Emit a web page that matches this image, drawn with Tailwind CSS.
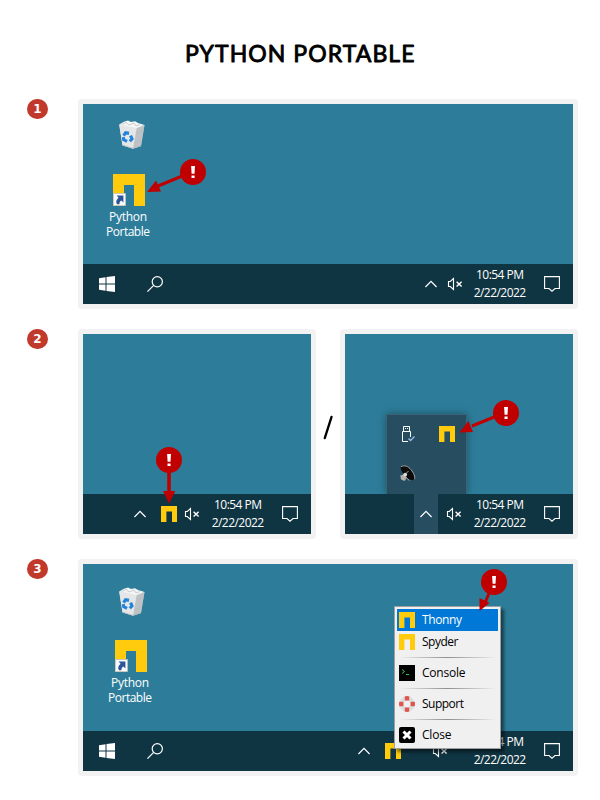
<!DOCTYPE html>
<html lang="en">
<head>
<meta charset="utf-8">
<title>Python Portable</title>
<script src="https://cdn.jsdelivr.net/npm/@tailwindcss/browser@4"></script>
</head>
<body class="bg-white w-[600px] h-[800px] overflow-hidden font-['Open_Sans',sans-serif]">
<svg width="0" height="0" class="absolute">
  <defs>
    <symbol id="win" viewBox="0 0 16 16"><path fill="#fff" d="M0 2.3 6.5 1.3V7.5H0zM7.5 1.1 16 0V7.5H7.5zM0 8.5H6.5V14.7L0 13.7zM7.5 8.5H16V16L7.5 14.9z"/></symbol>
    <symbol id="search" viewBox="0 0 16 16"><g fill="none" stroke="#fff" stroke-width="1.2"><circle cx="10.3" cy="5.7" r="5.1"/><path d="M6.7 9.3.4 15.6"/></g></symbol>
    <symbol id="chev" viewBox="0 0 12 8"><path fill="none" stroke="#fff" stroke-width="1.3" d="M.4 7 6 1.4 11.6 7"/></symbol>
    <symbol id="speaker" viewBox="0 0 16 14"><g fill="none" stroke="#fff"><path stroke-width="1.1" d="M1.5 4.5H3.3L6.5 1.5V12.5L3.3 9.5H1.5z"/><path stroke-width="1.4" d="M9.6 4.7 14.6 9.5M14.6 4.7 9.6 9.5"/></g></symbol>
    <symbol id="note" viewBox="0 0 16 16"><path fill="none" stroke="#fff" stroke-width="1.1" d="M.6.6H15.4V12.5H11L8 15.2 5 12.5H.6z"/></symbol>
    <symbol id="arch" viewBox="0 0 32 32"><path fill="#ffcb0c" d="M0 0H32V32H21V11H11V32H0z"/></symbol>
    <symbol id="archS" viewBox="0 0 16 16"><path fill="#ffcb0c" d="M0 0H16V16H11V5.6H5.4V16H0z"/></symbol>
    <symbol id="bang" viewBox="0 0 26 26"><circle cx="13" cy="13" r="13" fill="#c00000"/><path fill="#fff" d="M11.1 7H15L14.5 14.8H11.6zM11.5 16.4H14.6V19H11.5z"/></symbol>
    <symbol id="bin" viewBox="0 0 28 30">
      <path fill="#d3d5d7" d="M1.2 4.5 19 6.8 26.5 5 23 26 15 28.8 4.5 25.5z"/>
      <path fill="#b4b8bb" d="M18.8 7 26.5 5 23 26 15 28.8z" opacity=".65"/>
      <path fill="#e4e6e8" d="M1.2 4.5 18.8 7 15 28.5 4.5 25.2z"/>
      <path fill="#f5f6f6" d="M1.2 4.5 6 1.8 10 .6 13 2 17 1.2 20 3 26.5 5 18.8 8z"/>
      <path fill="none" stroke="#b4babe" stroke-width=".7" d="M4 4.5 8 2.5 11 5 16 3 18 6 22 4.5M19 13l5-2M17 23l6-3M4.5 25l10.5 3.3L23 25.8"/>
      <path fill="none" stroke="#2083dd" stroke-width="3.1" d="M5.6 15.6 7.6 12.8 11 13.4M12.6 15.6 14 19 11.8 21.3M9 21.4 5.6 19.6 5.4 17.2"/>
    </symbol>
    <symbol id="short" viewBox="0 0 13 13"><path fill="#fafafa" stroke="#b8c0c4" stroke-width=".8" d="M.4.4H12.6V12.6H.4z"/><path fill="#2d549b" d="M3.6 2.5H10.4V9.4L8.3 7.4C6.7 8.4 6.4 9.5 6.4 11.3H4C2.4 8.8 3.4 6.7 5.6 4.8z"/></symbol>
  </defs>
</svg>

<header class="h-[99px] flex justify-center pt-[36px]">
  <svg width="236" height="36"><text x="3" y="26.4" textLength="229.5" font-family="Lato, sans-serif" font-size="23" stroke="#000" stroke-width=".9" stroke-linejoin="round">PYTHON PORTABLE</text></svg>
</header>

<main class="flex flex-col gap-5 pl-[27px] pr-[22px]">
  <!-- Step 1 -->
  <section class="flex gap-[30px]">
    <div class="w-[21px] h-5 rounded-full bg-[#c1392b] text-white text-[12px] font-['DejaVu_Sans',sans-serif] font-bold leading-[21px] text-center">1</div>
    <div class="relative w-[500px] h-[210px] rounded bg-[#f2f2f2] p-[5px] flex flex-col">
      <div class="flex-1 bg-[#2d7d9a] pt-4 pl-[17px]">
        <div class="w-[56px] flex flex-col items-center">
          <svg class="ml-[7px]" width="28" height="30"><use href="#bin"/></svg>
          <div class="relative mt-6 ml-[1px] w-8 h-8"><svg width="32" height="32"><use href="#arch"/></svg><svg class="absolute left-0 bottom-0" width="13" height="13"><use href="#short"/></svg></div>
          <svg class="mt-1" width="56" height="32" fill="#fff" font-size="12"><text x="9" y="11" textLength="38">Python</text><text x="6" y="26" textLength="44">Portable</text></svg>
        </div>
      </div>
      <div class="h-10 shrink-0 bg-[#103542] flex items-center pl-4 pr-[13px]">
        <svg width="16" height="16"><use href="#win"/></svg>
        <svg class="ml-8" width="16" height="16"><use href="#search"/></svg>
        <svg class="ml-auto" width="12" height="8"><use href="#chev"/></svg>
        <svg class="ml-[10px]" width="16" height="14"><use href="#speaker"/></svg>
        <svg class="ml-[10px] mr-[17px]" width="54" height="40" fill="#fff" font-size="12"><text x="3" y="15" textLength="48">10:54 PM</text><text x=".7" y="33" textLength="52.5">2/22/2022</text></svg>
        <svg width="16" height="16"><use href="#note"/></svg>
      </div>
      <svg class="absolute left-[68px] top-[60px]" width="62" height="36"><path stroke="#c00000" stroke-width="3" d="M46 13 12 27"/><path fill="#c00000" d="M1 33 10 21.5 15 32.5z"/><use href="#bang" x="34" width="26" height="26"/></svg>
    </div>
  </section>

  <!-- Step 2 -->
  <section class="flex">
    <div class="w-[21px] h-5 mr-[30px] rounded-full bg-[#c1392b] text-white text-[12px] font-['DejaVu_Sans',sans-serif] font-bold leading-[21px] text-center">2</div>
    <div class="relative w-[238px] h-[210px] rounded bg-[#f2f2f2] p-[5px] flex flex-col">
      <div class="flex-1 bg-[#2d7d9a]"></div>
      <div class="h-10 shrink-0 bg-[#103542] flex items-center justify-end pr-[13px]">
        <svg width="12" height="8"><use href="#chev"/></svg>
        <svg class="ml-[15px]" width="16" height="16"><use href="#archS"/></svg>
        <svg class="ml-[7px]" width="16" height="14"><use href="#speaker"/></svg>
        <svg class="ml-[11px] mr-[17px]" width="54" height="40" fill="#fff" font-size="12"><text x="3" y="15" textLength="48">10:54 PM</text><text x=".7" y="33" textLength="52.5">2/22/2022</text></svg>
        <svg width="16" height="16"><use href="#note"/></svg>
      </div>
      <svg class="absolute left-[77px] top-[118px]" width="28" height="58"><path stroke="#c00000" stroke-width="3.6" d="M14 20V48"/><path fill="#c00000" d="M8 44H20.3L14 56.5z"/><use href="#bang" x="1" width="26" height="26"/></svg>
    </div>
    <svg width="24" height="210"><path fill="none" stroke="#000" stroke-width="2.4" stroke-linecap="round" d="M15.5 88 8.8 109"/></svg>
    <div class="relative w-[238px] h-[210px] rounded bg-[#f2f2f2] p-[5px] flex flex-col">
      <div class="flex-1 bg-[#2d7d9a]"></div>
      <div class="relative h-10 shrink-0 bg-[#103542] flex items-center justify-end pr-[13px]">
        <div class="w-6 h-10 bg-[#274d61] flex items-center justify-center"><svg width="12" height="8"><use href="#chev"/></svg></div>
        <svg class="ml-2" width="16" height="14"><use href="#speaker"/></svg>
        <svg class="ml-[11px] mr-[17px]" width="54" height="40" fill="#fff" font-size="12"><text x="3" y="15" textLength="48">10:54 PM</text><text x=".7" y="33" textLength="52.5">2/22/2022</text></svg>
        <svg width="16" height="16"><use href="#note"/></svg>
      </div>
      <div class="absolute left-[46px] top-[85px] w-[81px] h-[80px] [clip-path:inset(-12px_-12px_0_-12px)] bg-[#274d61] border border-b-0 border-[#3b6375] shadow-[0_0_8px_rgba(0,0,0,0.35)] pt-[10px] px-[12px] grid grid-cols-2 grid-rows-[40px_24px] gap-x-[15px] items-start">
        <svg width="18" height="18" fill="none" stroke="#fff"><path d="M4.5 6V1.5H10.5V6M9 16.5H3.5V6.5H11.5V12"/><path fill="#fff" stroke="none" d="M6 3H7V4H6zM8 3H9V4H8z"/><path stroke="#9bbbe8" stroke-width="1.4" d="M9.5 13.5 11.5 15.5 15.5 11.5"/></svg>
        <svg class="ml-[5px] mt-px" width="16" height="16"><use href="#archS"/></svg>
        <svg width="18" height="18"><path d="M2 1.5C5-.5 9.5 1 12 4.5 14.5 7.5 17 12 15.5 14.5 11 16 7 13 4.5 9 2.5 6 1 3.5 2 1.5z" fill="#0c0c0c"/><path d="M2 1.7C5-.2 9.5 1.2 12 4.7 14.5 7.7 16.5 12 15.5 14.3" fill="none" stroke="#c8c8c8" stroke-width=".8"/><path d="M1.3 10.5 5 9.5 8 12.5 5.5 16 2 14.5z" fill="#b5b1ab"/><circle cx="6.2" cy="9.6" r="1.9" fill="#ddd"/><path d="M7.5 13 10.5 15.5M7 8.5 9.5 6" stroke="#aaa"/></svg>
      </div>
      <svg class="absolute left-[118px] top-[70px]" width="64" height="38"><path stroke="#c00000" stroke-width="3" d="M46 14 14 27"/><path fill="#c00000" d="M1.5 33.5 10.5 22 15 33z"/><use href="#bang" x="35" y="1" width="26" height="26"/></svg>
    </div>
  </section>

  <!-- Step 3 -->
  <section class="flex gap-[30px]">
    <div class="w-[21px] h-5 rounded-full bg-[#c1392b] text-white text-[12px] font-['DejaVu_Sans',sans-serif] font-bold leading-[21px] text-center">3</div>
    <div class="relative w-[500px] h-[217px] rounded bg-[#f2f2f2] p-[5px] flex flex-col">
      <div class="flex-1 bg-[#2d7d9a] pt-[23px] pl-[19px]">
        <div class="w-[56px] flex flex-col items-center">
          <svg class="ml-[3px]" width="28" height="30"><use href="#bin"/></svg>
          <div class="relative mt-[23px] ml-[1px] w-8 h-8"><svg width="32" height="32"><use href="#arch"/></svg><svg class="absolute left-0 bottom-0" width="13" height="13"><use href="#short"/></svg></div>
          <svg class="mt-1" width="56" height="32" fill="#fff" font-size="12"><text x="9" y="11" textLength="38">Python</text><text x="6" y="26" textLength="44">Portable</text></svg>
        </div>
      </div>
      <div class="h-10 shrink-0 bg-[#103542] flex items-center pl-4 pr-[13px]">
        <svg width="16" height="16"><use href="#win"/></svg>
        <svg class="ml-8" width="16" height="16"><use href="#search"/></svg>
        <svg class="ml-auto" width="12" height="8"><use href="#chev"/></svg>
        <svg class="ml-[15px]" width="16" height="16"><use href="#archS"/></svg>
        <svg class="ml-[31px]" width="16" height="14"><use href="#speaker"/></svg>
        <svg class="ml-[25px] mr-[17px]" width="54" height="40" fill="#fff" font-size="12"><text x="3" y="15" textLength="48">10:54 PM</text><text x=".7" y="33" textLength="52.5">2/22/2022</text></svg>
        <svg width="16" height="16"><use href="#note"/></svg>
      </div>
      <div class="absolute left-[316px] top-[47px] w-[107px] h-[143px] bg-[#f0f0f0] border border-[#a0a0a0] p-[2px] shadow-[3px_3px_3px_rgba(0,0,0,0.5)] text-[12px] text-black">
        <div class="h-[22px] bg-[#0078d7] flex items-center pl-[2px] gap-[7px]"><svg width="16" height="16"><use href="#archS"/></svg><svg width="76" height="22" fill="#fff"><text x="0" y="15" textLength="40">Thonny</text></svg></div>
        <div class="h-[22px] flex items-center pl-[2px] gap-[7px]"><svg width="16" height="16"><use href="#archS"/></svg><svg width="76" height="22"><text x="0" y="15" textLength="36.5">Spyder</text></svg></div>
        <div class="h-[9px] pt-1 px-[2px]"><div class="h-px bg-linear-to-r from-[#f0f0f0] via-[#909090] to-[#f0f0f0]"></div></div>
        <div class="h-[22px] flex items-center pl-[2px] gap-[7px]"><svg width="16" height="16"><path d="M0 0H16V16H0z"/><path fill="none" stroke="#35c63b" d="M3 4.5 5.5 6.5 3 8.5M7 9.5H10"/></svg><svg width="76" height="22"><text x="0" y="15" textLength="43.5">Console</text></svg></div>
        <div class="h-[9px] pt-1 px-[2px]"><div class="h-px bg-linear-to-r from-[#f0f0f0] via-[#909090] to-[#f0f0f0]"></div></div>
        <div class="h-[22px] flex items-center pl-[2px] gap-[7px]"><svg width="16" height="16"><circle cx="8" cy="8" r="5.6" fill="none" stroke="#dcdee1" stroke-width="4.6"/><path fill="#e05548" d="M5.8.4Q8-.4 10.2.4V4.4H5.8zM5.8 11.6H10.2V15.6Q8 16.4 5.8 15.6zM.4 5.8H4.4V10.2H.4Q-.4 8 .4 5.8zM11.6 5.8H15.6Q16.4 8 15.6 10.2H11.6z"/></svg><svg width="76" height="22"><text x="0" y="15" textLength="42">Support</text></svg></div>
        <div class="h-[9px] pt-1 px-[2px]"><div class="h-px bg-linear-to-r from-[#f0f0f0] via-[#909090] to-[#f0f0f0]"></div></div>
        <div class="h-[22px] flex items-center pl-[2px] gap-[7px]"><svg width="16" height="16"><rect width="16" height="16" rx="2"/><path stroke="#fff" stroke-width="3" d="M4.5 4.5 11.5 11.5M11.5 4.5 4.5 11.5"/></svg><svg width="76" height="22"><text x="0" y="15" textLength="29.5">Close</text></svg></div>
      </div>
      <svg class="absolute left-[400px] top-[10px]" width="32" height="44"><path stroke="#c00000" stroke-width="3" d="M12 22 7 34"/><path fill="#c00000" d="M1.5 29 11.5 34 1.5 42z"/><use href="#bang" x="3" width="26" height="26"/></svg>
    </div>
  </section>
</main>
</body>
</html>
